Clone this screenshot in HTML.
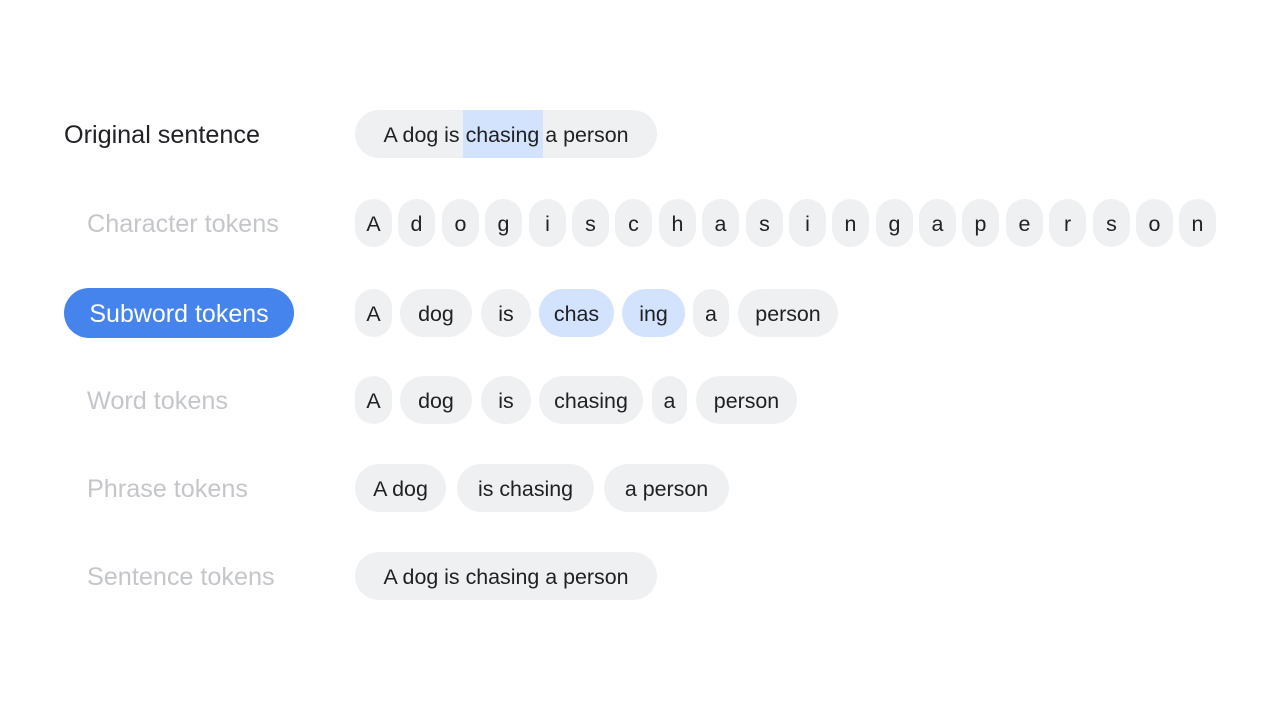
<!DOCTYPE html>
<html><head><meta charset="utf-8"><style>
body{margin:0;width:1280px;height:720px;background:#fff;position:relative;overflow:hidden;font-family:"Liberation Sans",Arial,sans-serif}
.l{position:absolute;font-size:25.2px;color:#c4c6c9;line-height:30px}
.p{position:absolute;height:48px;border-radius:24px;background:#eef0f2;color:#202124;font-size:21.4px;display:flex;align-items:center;justify-content:center;white-space:nowrap;padding-top:2px;box-sizing:border-box}
.h{background:#d3e3fd}
</style></head><body>
<div class="l" style="left:64px;top:120px;color:#202124">Original sentence</div>
<div class="l" style="left:87px;top:209px">Character tokens</div>
<div style="position:absolute;left:64px;top:288px;width:230px;height:50px;border-radius:25px;background:#4584ec;color:#fff;font-size:25px;display:flex;align-items:center;justify-content:center;padding-top:2px;box-sizing:border-box">Subword tokens</div>
<div class="l" style="left:87px;top:386px">Word tokens</div>
<div class="l" style="left:87px;top:474px">Phrase tokens</div>
<div class="l" style="left:87px;top:562px">Sentence tokens</div>

<div class="p" style="left:355px;top:110px;width:302px;overflow:hidden"><span style="position:absolute;left:108px;top:0;width:80px;height:48px;background:#d3e3fd"></span><span style="position:relative">A dog is chasing a person</span></div>

<div class="p" style="left:355px;top:199px;width:37px">A</div>
<div class="p" style="left:398px;top:199px;width:37px">d</div>
<div class="p" style="left:442px;top:199px;width:37px">o</div>
<div class="p" style="left:485px;top:199px;width:37px">g</div>
<div class="p" style="left:529px;top:199px;width:37px">i</div>
<div class="p" style="left:572px;top:199px;width:37px">s</div>
<div class="p" style="left:615px;top:199px;width:37px">c</div>
<div class="p" style="left:659px;top:199px;width:37px">h</div>
<div class="p" style="left:702px;top:199px;width:37px">a</div>
<div class="p" style="left:746px;top:199px;width:37px">s</div>
<div class="p" style="left:789px;top:199px;width:37px">i</div>
<div class="p" style="left:832px;top:199px;width:37px">n</div>
<div class="p" style="left:876px;top:199px;width:37px">g</div>
<div class="p" style="left:919px;top:199px;width:37px">a</div>
<div class="p" style="left:962px;top:199px;width:37px">p</div>
<div class="p" style="left:1006px;top:199px;width:37px">e</div>
<div class="p" style="left:1049px;top:199px;width:37px">r</div>
<div class="p" style="left:1093px;top:199px;width:37px">s</div>
<div class="p" style="left:1136px;top:199px;width:37px">o</div>
<div class="p" style="left:1179px;top:199px;width:37px">n</div>

<div class="p" style="left:355px;top:289px;width:37px">A</div>
<div class="p" style="left:400px;top:289px;width:72px">dog</div>
<div class="p" style="left:481px;top:289px;width:50px">is</div>
<div class="p h" style="left:539px;top:289px;width:75px">chas</div>
<div class="p h" style="left:622px;top:289px;width:63px">ing</div>
<div class="p" style="left:693px;top:289px;width:36px">a</div>
<div class="p" style="left:738px;top:289px;width:100px">person</div>

<div class="p" style="left:355px;top:376px;width:37px">A</div>
<div class="p" style="left:400px;top:376px;width:72px">dog</div>
<div class="p" style="left:481px;top:376px;width:50px">is</div>
<div class="p" style="left:539px;top:376px;width:104px">chasing</div>
<div class="p" style="left:652px;top:376px;width:35px">a</div>
<div class="p" style="left:696px;top:376px;width:101px">person</div>

<div class="p" style="left:355px;top:464px;width:91px">A dog</div>
<div class="p" style="left:457px;top:464px;width:137px">is chasing</div>
<div class="p" style="left:604px;top:464px;width:125px">a person</div>

<div class="p" style="left:355px;top:552px;width:302px">A dog is chasing a person</div>
</body></html>
